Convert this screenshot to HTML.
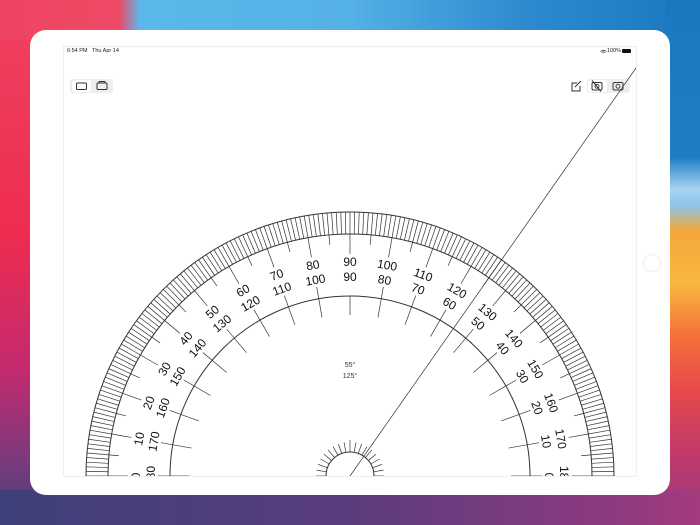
<!DOCTYPE html>
<html><head><meta charset="utf-8"><style>
html,body{margin:0;padding:0;width:700px;height:525px;overflow:hidden;font-family:"Liberation Sans",sans-serif}
.bg{position:absolute;left:0;top:0;width:700px;height:525px;
background:linear-gradient(180deg,#ef4262 0%,#ee2c50 45%,#c42a6e 70%,#7a3a7c 88%,#41407a 100%);}
.top{position:absolute;left:0;top:0;width:700px;height:40px;
background:linear-gradient(90deg,#ef4463 0%,#ee4a66 17%,#5cb8ea 20%,#55b0e6 50%,#2d8ace 75%,#1a78c0 100%)}
.right{position:absolute;left:665px;top:0;width:35px;height:525px;
background:linear-gradient(180deg,#1a78c0 0%,#1e7ec4 30%,#a8d4f0 36%,#8cc4ea 39%,#f4a83a 44%,#f8b840 54%,#f4703a 64%,#e84a4a 74%,#c23a6a 86%,#9a3a80 100%)}
.bottom{position:absolute;left:0;top:490px;width:700px;height:35px;background:linear-gradient(90deg,#3e4079,#5a3d7c 50%,#8a3a80 85%,#a33b7e)}
.ipad{position:absolute;left:30px;top:30px;width:640px;height:465px;background:#fff;border-radius:16px}
.screen{position:absolute;left:64px;top:47px;width:572px;height:429px;background:#fff;outline:1px solid #eceef0;overflow:hidden}
.home{position:absolute;left:643px;top:254px;width:16px;height:16px;border:1px solid #eee;border-radius:50%}
.status{position:absolute;top:48px;font-size:5.5px;color:#222}
</style></head><body>
<div class="bg"></div>
<div class="top"></div>
<div class="right"></div>
<div class="bottom"></div>
<div class="ipad"></div>
<div class="home"></div>
<div class="screen"></div>
<div class="status" style="left:67px">6:54 PM&nbsp;&nbsp; Thu Apr 14</div>
<div class="status" style="left:607px">100%</div>
<div style="position:absolute;left:622px;top:49px;width:9px;height:4px;background:#111;border-radius:1px"></div>
<svg width="700" height="525" style="position:absolute;left:0;top:0" font-family="Liberation Sans, sans-serif">
<defs><clipPath id="cp"><rect x="64" y="47" width="572" height="429"/></clipPath></defs>
<path d="M600.5 51.5 q3 -2.5 6 0 M601.8 52.6 q1.7 -1.4 3.4 0" stroke="#222" stroke-width="0.8" fill="none"/>
<rect x="70" y="79" width="43" height="14" rx="3" fill="#eeeeef"/>
<rect x="72" y="80" width="19" height="12" rx="2.5" fill="#fff"/>
<rect x="76.5" y="83" width="10" height="6.5" rx="1" fill="none" stroke="#333" stroke-width="1"/>
<rect x="97" y="83" width="10" height="6.5" rx="1" fill="none" stroke="#333" stroke-width="1"/>
<path d="M99 83 v-1.5 h6 v1.5" fill="none" stroke="#333" stroke-width="0.9"/>
<rect x="587" y="79" width="43" height="14" rx="3" fill="#eeeeef"/>
<rect x="588" y="80" width="19" height="12" rx="2.5" fill="#fff"/>
<path d="M577 83 h-5 v8 h8 v-5 M575 87 l6 -6" fill="none" stroke="#333" stroke-width="1"/>
<rect x="592" y="82.5" width="10" height="7.5" rx="1.5" fill="none" stroke="#333" stroke-width="1"/>
<circle cx="597" cy="86.3" r="2" fill="none" stroke="#333" stroke-width="0.9"/>
<path d="M592 80.5 l9 11" stroke="#333" stroke-width="1"/>
<rect x="613" y="82.5" width="10" height="7.5" rx="1.5" fill="none" stroke="#333" stroke-width="1"/>
<circle cx="618" cy="86.3" r="2" fill="none" stroke="#333" stroke-width="0.9"/>
<g clip-path="url(#cp)">
<g id="ticks" stroke="#333" stroke-width="0.7"></g>
<path d="M86 476 A264 264 0 0 1 614 476" fill="none" stroke="#333" stroke-width="1"/>
<path d="M108 476 A242 242 0 0 1 592 476" fill="none" stroke="#333" stroke-width="1"/>
<path d="M170 476 A180 180 0 0 1 530 476" fill="none" stroke="#333" stroke-width="1"/>
<path d="M326 476 A24 24 0 0 1 374 476" fill="none" stroke="#333" stroke-width="1"/>
<line x1="350" y1="476" x2="636" y2="68" stroke="#333" stroke-width="0.7"/>
<text x="350" y="367" font-size="7" text-anchor="middle" fill="#333">55°</text>
<text x="350" y="378" font-size="7" text-anchor="middle" fill="#333">125°</text>
<g font-size="12" text-anchor="middle" fill="#111">
<text x="350" y="266" transform="rotate(-90 350 476)">0</text>
<text x="350" y="266" transform="rotate(-80 350 476)">10</text>
<text x="350" y="266" transform="rotate(-70 350 476)">20</text>
<text x="350" y="266" transform="rotate(-60 350 476)">30</text>
<text x="350" y="266" transform="rotate(-50 350 476)">40</text>
<text x="350" y="266" transform="rotate(-40 350 476)">50</text>
<text x="350" y="266" transform="rotate(-30 350 476)">60</text>
<text x="350" y="266" transform="rotate(-20 350 476)">70</text>
<text x="350" y="266" transform="rotate(-10 350 476)">80</text>
<text x="350" y="266">90</text>
<text x="350" y="266" transform="rotate(10 350 476)">100</text>
<text x="350" y="266" transform="rotate(20 350 476)">110</text>
<text x="350" y="266" transform="rotate(30 350 476)">120</text>
<text x="350" y="266" transform="rotate(40 350 476)">130</text>
<text x="350" y="266" transform="rotate(50 350 476)">140</text>
<text x="350" y="266" transform="rotate(60 350 476)">150</text>
<text x="350" y="266" transform="rotate(70 350 476)">160</text>
<text x="350" y="266" transform="rotate(80 350 476)">170</text>
<text x="350" y="266" transform="rotate(90 350 476)">180</text>
<text x="350" y="281" transform="rotate(-90 350 476)">180</text>
<text x="350" y="281" transform="rotate(-80 350 476)">170</text>
<text x="350" y="281" transform="rotate(-70 350 476)">160</text>
<text x="350" y="281" transform="rotate(-60 350 476)">150</text>
<text x="350" y="281" transform="rotate(-50 350 476)">140</text>
<text x="350" y="281" transform="rotate(-40 350 476)">130</text>
<text x="350" y="281" transform="rotate(-30 350 476)">120</text>
<text x="350" y="281" transform="rotate(-20 350 476)">110</text>
<text x="350" y="281" transform="rotate(-10 350 476)">100</text>
<text x="350" y="281">90</text>
<text x="350" y="281" transform="rotate(10 350 476)">80</text>
<text x="350" y="281" transform="rotate(20 350 476)">70</text>
<text x="350" y="281" transform="rotate(30 350 476)">60</text>
<text x="350" y="281" transform="rotate(40 350 476)">50</text>
<text x="350" y="281" transform="rotate(50 350 476)">40</text>
<text x="350" y="281" transform="rotate(60 350 476)">30</text>
<text x="350" y="281" transform="rotate(70 350 476)">20</text>
<text x="350" y="281" transform="rotate(80 350 476)">10</text>
<text x="350" y="281" transform="rotate(90 350 476)">0</text>
</g>
</g>
<line x1="64" y1="476.5" x2="636" y2="476.5" stroke="#eceef0" stroke-width="1"/>
</svg>
<script>
var g=document.getElementById('ticks'),s='';
function L(a,r1,r2){var t=a*Math.PI/180,c=Math.cos(t),n=Math.sin(t);
s+='<line x1="'+(350+r1*c).toFixed(2)+'" y1="'+(476-r1*n).toFixed(2)+'" x2="'+(350+r2*c).toFixed(2)+'" y2="'+(476-r2*n).toFixed(2)+'"/>';}
for(var a=0;a<=180;a++){L(a,242,264);if(a%10==0)L(a,222,242);else if(a%5==0)L(a,232,242);}
for(var a=0;a<=180;a+=10){if(a==90)L(a,161,180);else L(a,161,192);
 L(a,24,a==90?36:34);}
g.innerHTML=s;
</script>
</body></html>
